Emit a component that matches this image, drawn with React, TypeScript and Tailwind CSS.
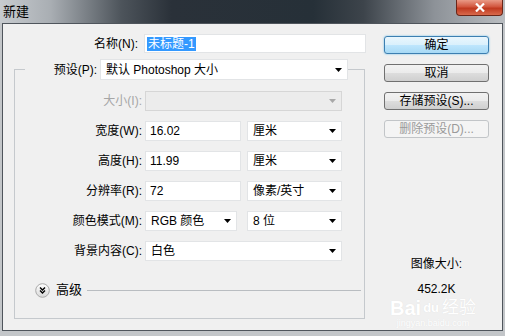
import React from "react";

const FONT = "font-['Liberation_Sans','Noto_Sans_CJK_SC',sans-serif]";

function Arrow({ disabled }: { disabled?: boolean }) {
  return (
    <svg width="7" height="4" viewBox="0 0 7 4" className="shrink-0">
      <path d="M0 0h7L3.5 4z" fill={disabled ? "#a8a8a8" : "#000"} />
    </svg>
  );
}

function Select({ w, text, disabled }: { w: string; text?: string; disabled?: boolean }) {
  return (
    <div
      className={`${w} h-full flex items-center justify-between pl-[5px] pr-[5px] border ${
        disabled ? "bg-[#ececec] border-[#d6d6d6]" : "bg-white border-[#e2e4e6]"
      }`}
    >
      <span className="whitespace-nowrap leading-[14px]">{text}</span>
      <Arrow disabled={disabled} />
    </div>
  );
}

function Input({ w, text }: { w: string; text: string }) {
  return (
    <div className={`${w} h-full flex items-center pl-[4px] bg-white border border-[#e2e4e6]`}>
      <span className="leading-[14px]">{text}</span>
    </div>
  );
}

function Row({ label, dim, children }: { label: string; dim?: boolean; children: React.ReactNode }) {
  return (
    <div className="flex items-center h-[20px]">
      <div className={`w-[127px] text-right whitespace-nowrap leading-[14px] ${dim ? "text-[#a6a6a6]" : ""}`}>{label}</div>
      <div className="ml-[3px] flex h-full">{children}</div>
    </div>
  );
}

function Btn({ children, kind }: { children: React.ReactNode; kind?: "default" | "disabled" }) {
  const cls =
    kind === "default"
      ? "border-[#3c7fb1] bg-[linear-gradient(#eaf6fd_0%,#d9f0fc_50%,#bee6fd_51%,#a7d9f5_100%)] shadow-[0_0_2px_#5fb8e8]"
      : kind === "disabled"
      ? "border-[#c2c5c8] bg-[#f4f4f4] text-[#9a9a9a]"
      : "border-[#707070] bg-[linear-gradient(#f2f2f2_0%,#ebebeb_50%,#dddddd_51%,#cfcfcf_100%)]";
  return (
    <div className={`w-[105px] h-[18px] rounded-[3px] border flex items-center justify-center leading-[14px] ${cls}`}>
      {children}
    </div>
  );
}

export default function App() {
  return (
    <div className={`w-[505px] h-[336px] bg-[#c3c6c9] flex flex-col text-[12px] text-black ${FONT}`}>
      {/* title bar */}
      <div className="h-[23px] flex justify-between bg-[linear-gradient(90deg,#c7cbcf_0%,#a9aeb3_10%,#4d545b_24%,#2a3139_34%,#263038_62%,#3d444b_72%,#8d9298_86%,#b9bdc1_100%)]">
        <div className="pl-[3px] pt-[4px] text-[13px] leading-[16px]">新建</div>
        <div className="mr-[2px] w-[47px] h-[16px] rounded-b-[4px] border border-t-0 border-[#6b2618] bg-[linear-gradient(#e99a86_0%,#d2563e_45%,#c0391f_55%,#d86a4c_100%)] flex items-center justify-center">
          <svg width="10" height="9" viewBox="0 0 10 9">
            <path d="M1 0.5l8 8M9 0.5l-8 8" stroke="#fff" strokeWidth="2.2" />
          </svg>
        </div>
      </div>

      {/* client area */}
      <div className="mx-[2px] h-[308px] border border-[#4f555c] bg-[#f0f0f0] flex">
        {/* left column */}
        <div className="w-[363px] flex flex-col">
          <div className="mt-[10px] flex items-center h-[19px]">
            <div className="w-[138px] text-right pr-[3px] leading-[14px]">名称(N):</div>
            <div className="ml-[3px] w-[222px] h-full bg-white border border-[#e2e4e6] flex items-center pl-[2px]">
              <span className="bg-[#3399ff] text-white leading-[14px] px-px">未标题-1</span>
            </div>
          </div>

          {/* group box */}
          <div className="mt-[6px] ml-[11px] w-[351px] flex flex-col">
            <div className="flex items-center h-[21px] relative z-10">
              <div className="w-[11px] h-px bg-[#c5c9cd]" />
              <div className="w-[72px] text-right leading-[14px]">预设(P):</div>
              <div className="ml-[3px] h-full flex">
                <Select w="w-[248px]" text="默认 Photoshop 大小" />
              </div>
              <div className="flex-1 h-px bg-[#c5c9cd]" />
            </div>
            <div className="-mt-[11px] h-[250px] border-l border-r border-b border-[#c5c9cd] flex flex-col pt-[22px] gap-[10px]">
              <Row label="大小(I):" dim>
                <Select w="w-[197px]" disabled />
              </Row>
              <Row label="宽度(W):">
                <Input w="w-[96px]" text="16.02" />
                <div className="ml-[6px] h-full flex"><Select w="w-[95px]" text="厘米" /></div>
              </Row>
              <Row label="高度(H):">
                <Input w="w-[96px]" text="11.99" />
                <div className="ml-[6px] h-full flex"><Select w="w-[95px]" text="厘米" /></div>
              </Row>
              <Row label="分辨率(R):">
                <Input w="w-[96px]" text="72" />
                <div className="ml-[6px] h-full flex"><Select w="w-[95px]" text="像素/英寸" /></div>
              </Row>
              <Row label="颜色模式(M):">
                <Select w="w-[92px]" text="RGB 颜色" />
                <div className="ml-[10px] h-full flex"><Select w="w-[95px]" text="8 位" /></div>
              </Row>
              <Row label="背景内容(C):">
                <Select w="w-[197px]" text="白色" />
              </Row>
              <div className="mt-[12px] flex items-center h-[14px] pl-[20px] pr-[3px]">
                <svg width="15" height="15" viewBox="0 0 15 15" className="shrink-0">
                  <defs>
                    <linearGradient id="adv" x1="0" y1="0" x2="0" y2="1">
                      <stop offset="0" stopColor="#ffffff" />
                      <stop offset="1" stopColor="#d8d8d8" />
                    </linearGradient>
                  </defs>
                  <circle cx="7.5" cy="7.5" r="6.8" fill="url(#adv)" stroke="#a9a9a9" />
                  <path d="M5 4.5l2.5 2.5 2.5-2.5M5 7.5l2.5 2.5 2.5-2.5" fill="none" stroke="#000" strokeWidth="1.4" />
                </svg>
                <span className="ml-[6px] leading-[14px] text-[13px]">高级</span>
                <div className="ml-[5px] flex-1 h-px bg-[#b9bdc1]" />
              </div>
            </div>
          </div>
        </div>

        {/* right column */}
        <div className="ml-[18px] w-[105px] flex flex-col pt-[12px] relative">
          <div className="flex flex-col gap-[10px]">
            <Btn kind="default">确定</Btn>
            <Btn>取消</Btn>
            <Btn>存储预设(S)...</Btn>
            <Btn kind="disabled">删除预设(D)...</Btn>
          </div>
          <div className="mt-[118px] text-center leading-[16px]">图像大小:</div>
          <div className="mt-[9px] text-center leading-[16px]">452.2K</div>
          <div className="absolute left-[6px] top-[274px] flex flex-col items-center text-white [text-shadow:0_0_1px_#dcdcdc] pointer-events-none">
            <div className="flex items-center leading-[20px]">
              <span className="text-[20px] font-bold">Bai</span>
              <span className="ml-[2px] text-[13px] font-bold">du</span>
              <span className="ml-[3px] text-[17px]">经验</span>
            </div>
            <div className="text-[9px] leading-[11px]">jingyan.baidu.com</div>
          </div>
        </div>
      </div>
    </div>
  );
}
